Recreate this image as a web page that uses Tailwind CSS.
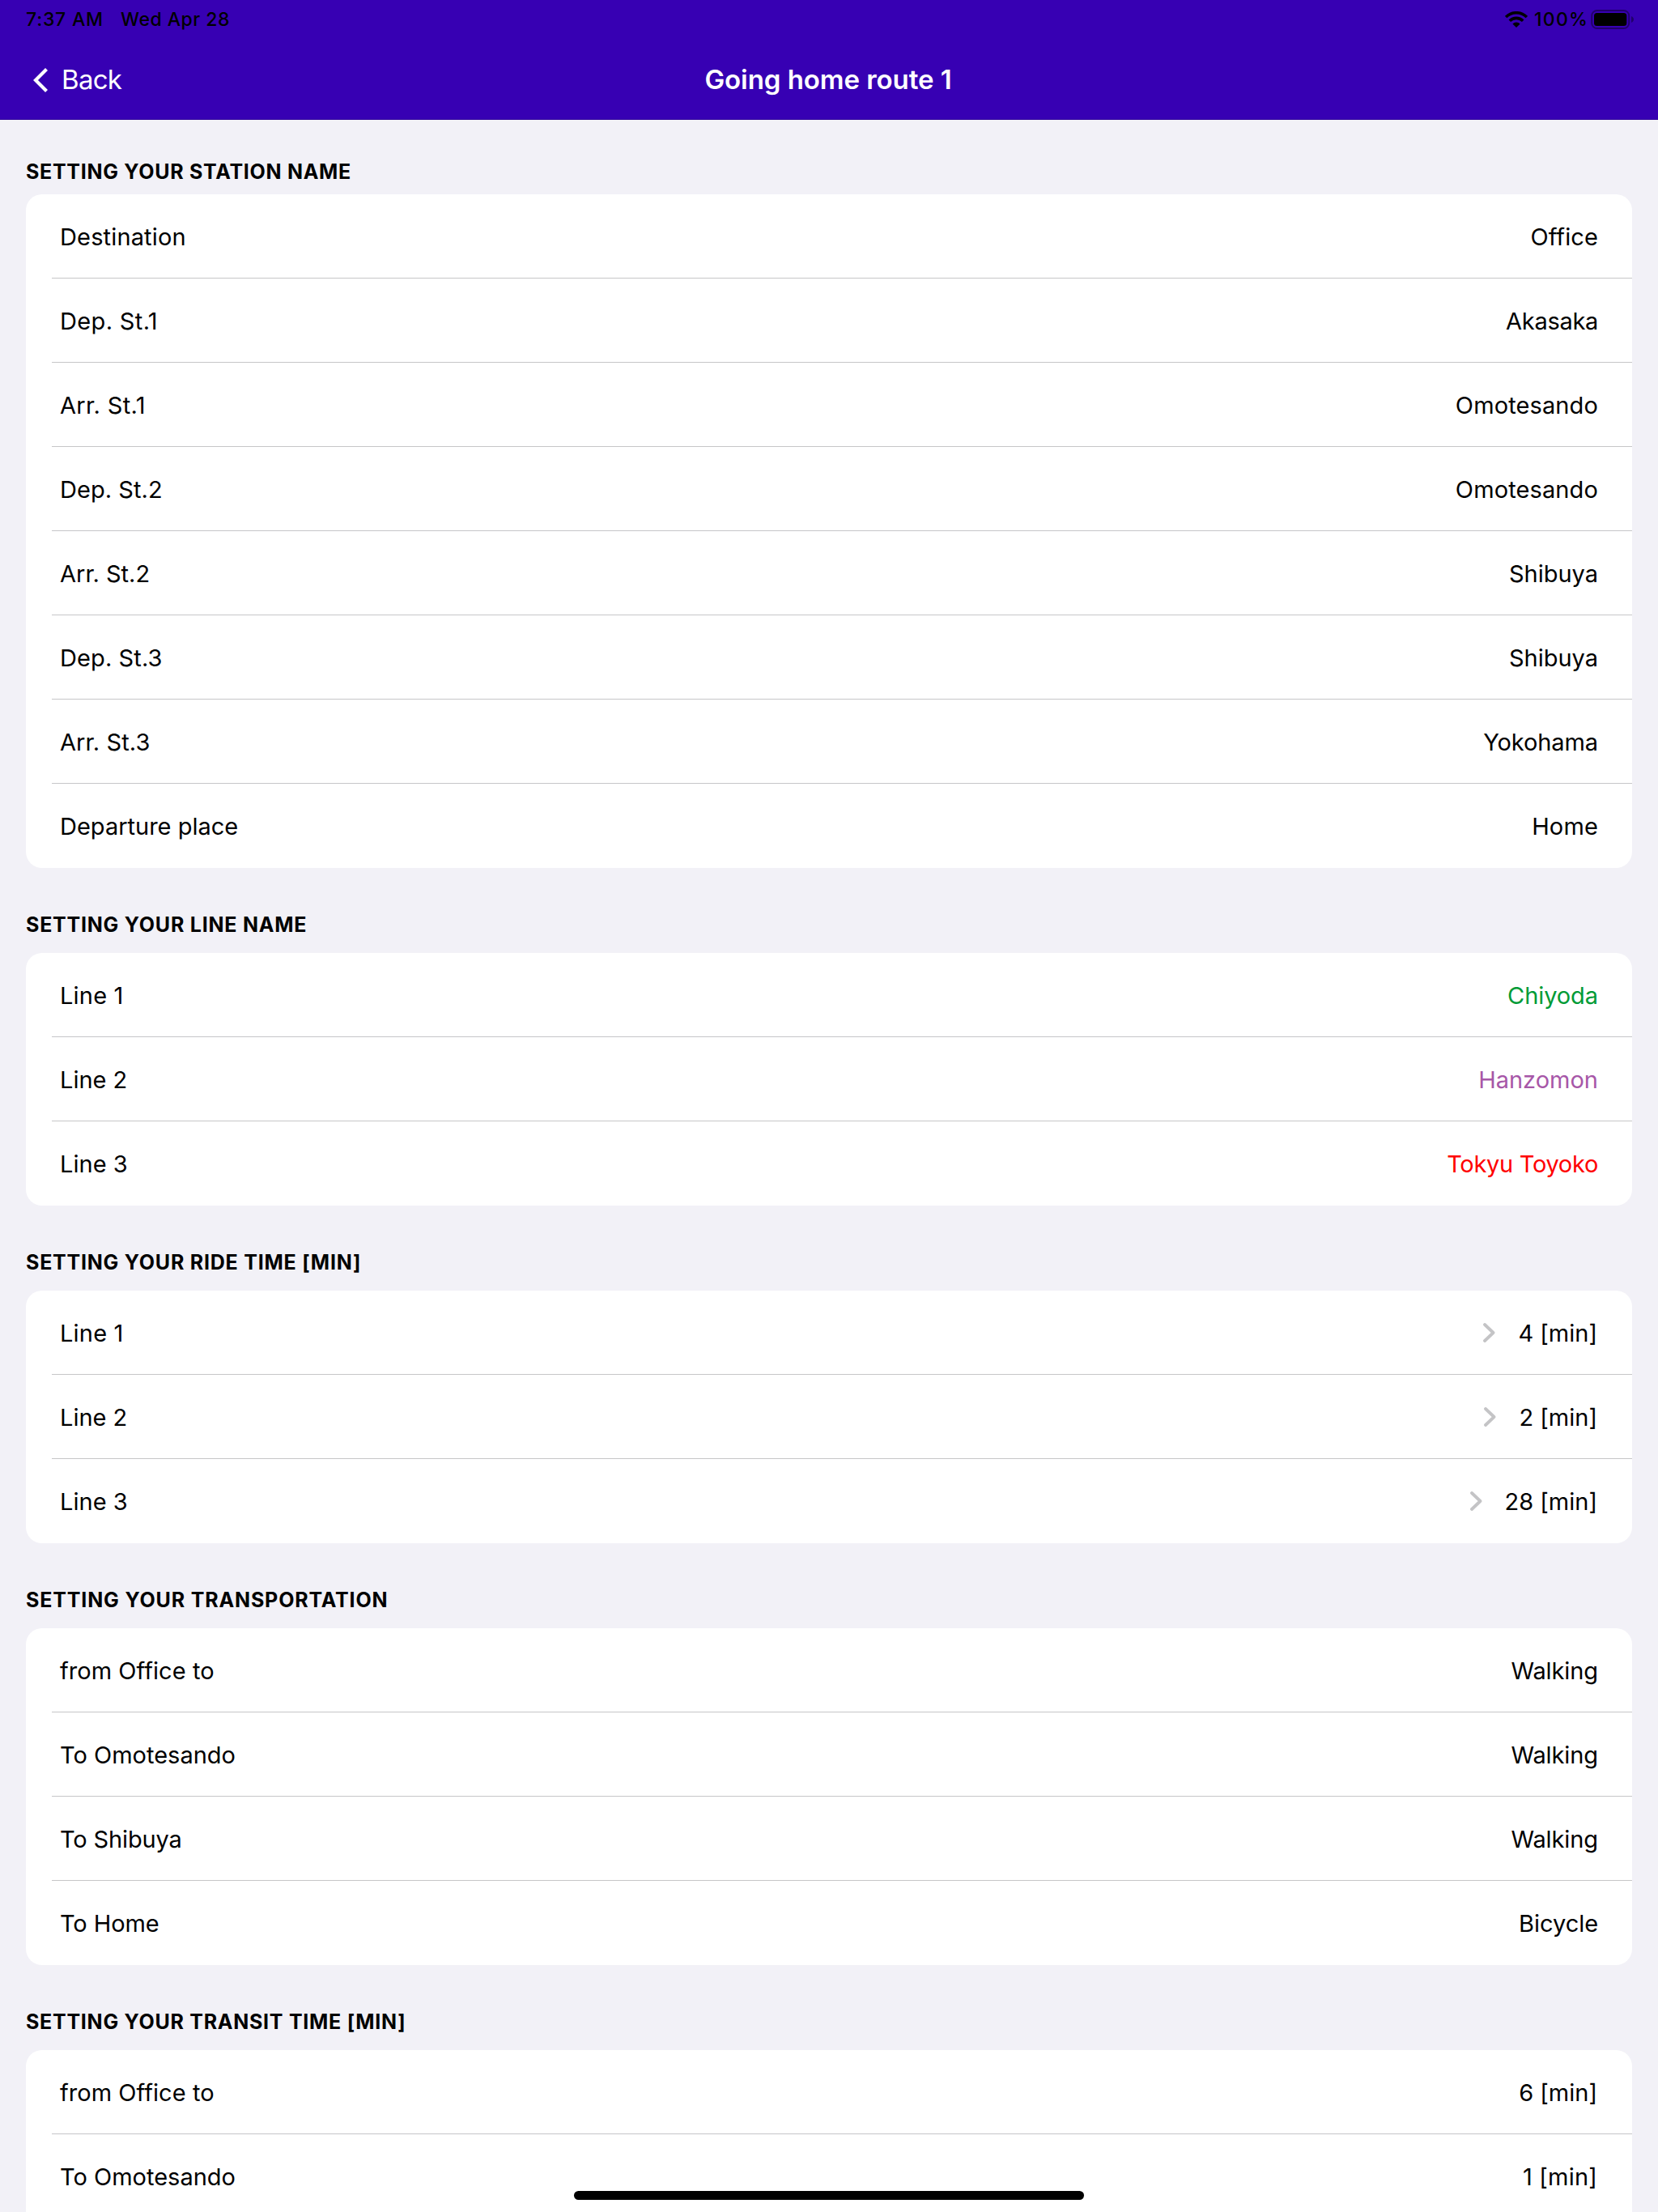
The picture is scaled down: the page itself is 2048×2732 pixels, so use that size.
<!DOCTYPE html>
<html lang="en">
<head>
<meta charset="utf-8">
<title>Going home route 1</title>
<script src="https://cdn.jsdelivr.net/npm/@tailwindcss/browser@4"></script>
</head>
<body class="relative flex h-[2732px] w-[2048px] flex-col overflow-hidden bg-[#f2f1f7] font-['Inter',sans-serif] text-black">
  <header class="flex h-[148px] shrink-0 flex-col border-b border-[#2f0099] bg-[#3700b3]">
    <div class="flex h-[38px] items-start justify-between pt-[10px] pr-[30px] pl-8 text-[23px] leading-[28px] font-medium">
      <div class="flex">
        <span class="w-[117px] tracking-[0.77px]">7:37 AM</span>
        <span class="tracking-[0.5px]">Wed Apr 28</span>
      </div>
      <div class="flex">
        <svg class="mt-1 mr-2 h-5 w-7" viewBox="0 0 28 20" fill="none" stroke="#000" stroke-width="3.6">
          <path d="M1.1 7.1A18.2 18.2 0 0 1 26.9 7.1"/>
          <path d="M5.8 11.8A11.6 11.6 0 0 1 22.2 11.8"/>
          <path d="M14 20L9.4 15.4A6.5 6.5 0 0 1 18.6 15.4Z" fill="#000" stroke="none"/>
        </svg>
        <span class="w-[70px] tracking-[1.25px]">100%</span>
        <svg class="mt-0.5 h-6 w-[53px]" viewBox="0 0 53 24">
          <rect x="1.2" y="1" width="46" height="22" rx="6.5" fill="none" stroke="#000" stroke-opacity=".4" stroke-width="2"/>
          <rect x="4" y="4" width="40.3" height="16" rx="3.5"/>
          <path d="M50 8c4 1.500 4 6.500 0 8z" fill-opacity=".4"/>
        </svg>
      </div>
    </div>
    <nav class="grid grid-cols-3 items-start pt-10 text-[33px] leading-[40px] text-white">
      <div class="flex pl-10">
        <svg class="mt-[5px] mr-[15px] h-8 w-[21px]" viewBox="0 0 21 32" fill="none" stroke="#fff" stroke-width="4.2"><path d="M17.500 2.500L4 16L17.500 29.500"/></svg>
        <span class="tracking-[-0.7px]">Back</span>
      </div>
      <h1 class="pr-0.5 text-center font-semibold tracking-[-0.06px]">Going home route 1</h1>
    </nav>
  </header>
  <main id="settings" class="flex flex-col px-8 pt-[49px]"></main>
  <div class="absolute top-[2706px] left-[709px] h-[11px] w-[630px] rounded-full bg-black"></div>

  <script>
    const sections = [
      { title: "Setting your station name", tracking: "tracking-[0.71px]", rows: [
        ["Destination", "Office", "tracking-[0.15px]", "tracking-[0.1px]"],
        ["Dep. St.1", "Akasaka", "tracking-[0.35px]", "tracking-[-0.3px]"],
        ["Arr. St.1", "Omotesando", "tracking-[0.35px]", "tracking-[0.12px]"],
        ["Dep. St.2", "Omotesando", "tracking-[0.05px]", "tracking-[0.12px]"],
        ["Arr. St.2", "Shibuya"],
        ["Dep. St.3", "Shibuya", "tracking-[0.1px]"],
        ["Arr. St.3", "Yokohama", "tracking-[0.1px]", "tracking-[-0.1px]"],
        ["Departure place", "Home", "", "tracking-[0.15px]"]] },
      { title: "Setting your line name", tracking: "tracking-[0.77px]", rows: [
        ["Line 1", "Chiyoda", "tracking-[0.2px]", "text-[#009b36] tracking-[-0.08px]"],
        ["Line 2", "Hanzomon", "", "text-[#a757a8]"],
        ["Line 3", "Tokyu Toyoko", "tracking-[0.05px]", "text-[#ff0000] tracking-[-0.3px]"]] },
      { title: "Setting your ride time [min]", tracking: "tracking-[0.77px]", chevron: true, rows: [
        ["Line 1", "4 [min]", "tracking-[0.2px]", "pr-px"],
        ["Line 2", "2 [min]", "", "pr-px"],
        ["Line 3", "28 [min]", "tracking-[0.05px]", "pr-px"]] },
      { title: "Setting your transportation", tracking: "tracking-[0.84px]", rows: [
        ["from Office to", "Walking", "tracking-[0.05px]", "tracking-[-0.1px]"],
        ["To Omotesando", "Walking", "", "tracking-[-0.1px]"],
        ["To Shibuya", "Walking", "tracking-[-0.15px]", "tracking-[-0.1px]"],
        ["To Home", "Bicycle", "tracking-[-0.1px]", "tracking-[-0.05px]"]] },
      { title: "Setting your transit time [min]", tracking: "tracking-[0.73px]", rows: [
        ["from Office to", "6 [min]", "tracking-[0.05px]", "pr-px"],
        ["To Omotesando", "1 [min]", "", "pr-px tracking-[0.2px]"]] },
    ];
    const chevron = `<svg class="mt-2 mr-7 h-6 w-[15px]" viewBox="0 0 15 24" fill="none" stroke="#c4c4c6" stroke-width="3.8" stroke-linecap="round" stroke-linejoin="round"><path d="M2 2L12.500 12L2 22"/></svg>`;
    document.getElementById("settings").innerHTML = sections.map((s, i) => `
      <section class="${i ? "pt-[55px]" : ""}">
        <h2 class="${i ? "mb-5" : "mb-[13px]"} ${s.tracking} text-[25px] leading-[30px] font-bold uppercase">${s.title}</h2>
        <ul class="${i === sections.length - 1 ? "rounded-t-[20px]" : "rounded-[20px]"} overflow-hidden bg-white pl-8 text-[29px] leading-[41px]">
          ${s.rows.map(([label, value, labelStyle = "", valueStyle = ""]) => `
            <li class="flex h-[104px] items-start justify-between border-b border-[#c6c6c8] pt-8 pr-[42px] pl-[10px] last:border-b-0">
              <span class="${labelStyle}">${label}</span>
              <span class="flex">${s.chevron ? chevron : ""}<span class="${valueStyle}">${value}</span></span>
            </li>`).join("")}
        </ul>
      </section>`).join("");
  </script>
</body>
</html>
